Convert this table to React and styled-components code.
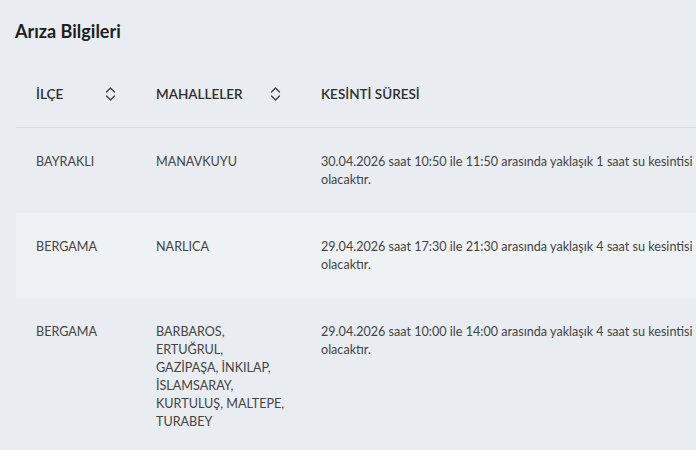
import React from "react";
import styled, { createGlobalStyle } from "styled-components";

const Global = createGlobalStyle`
  html, body { margin: 0; padding: 0; background: #e9edf1; overflow: hidden; }
  body { font-family: "Lato", "Noto Sans", sans-serif; }
`;

const Page = styled.div`
  padding: 16px 0 0 16px;
  width: 696px;
  box-sizing: border-box;
`;

const Title = styled.h2`
  margin: 0 0 15px -1px;
  font-size: 18px;
  line-height: 30px;
  font-weight: 700;
  color: #1e1e1e;
`;

const Table = styled.table`
  border-collapse: collapse;
  table-layout: fixed;
  width: 680px;
`;

const HeadCell = styled.th`
  width: ${(p) => p.$w}px;
  padding: 24px ${(p) => p.$pr ?? 20}px 24px 20px;
  text-align: left;
  font-size: 13.5px;
  line-height: 18px;
  font-weight: 600;
  color: #2e2e2e;
  border-bottom: 1px solid #d9dde2;
  box-sizing: border-box;
`;

const HeadInner = styled.div`
  display: flex;
  align-items: center;
  justify-content: space-between;
`;

const Row = styled.tr`
  background: ${(p) => (p.$striped ? "#eff2f5" : "transparent")};
`;

const Cell = styled.td`
  padding: 25px ${(p) => p.$pr ?? 20}px 24px 20px;
  vertical-align: top;
  font-size: 12.6px;
  line-height: 18px;
  color: #444;
  font-weight: 400;
`;

const Line = styled.span`
  display: block;
`;

const SortIcon = () => (
  <svg width="11" height="16" viewBox="0 0 11 16" fill="none" stroke="#3a3a3a" strokeWidth="1.3" strokeLinecap="round" strokeLinejoin="round">
    <polyline points="1.5,6 5.5,2 9.5,6" />
    <polyline points="1.5,10 5.5,14 9.5,10" />
  </svg>
);

const rows = [
  { ilce: "BAYRAKLI", mah: ["MANAVKUYU"], text: "30.04.2026 saat 10:50 ile 11:50 arasında yaklaşık 1 saat su kesintisi olacaktır." },
  { ilce: "BERGAMA", mah: ["NARLICA"], text: "29.04.2026 saat 17:30 ile 21:30 arasında yaklaşık 4 saat su kesintisi olacaktır." },
  {
    ilce: "BERGAMA",
    mah: ["BARBAROS,", "ERTUĞRUL,", "GAZİPAŞA, İNKILAP,", "İSLAMSARAY,", "KURTULUŞ, MALTEPE,", "TURABEY"],
    text: "29.04.2026 saat 10:00 ile 14:00 arasında yaklaşık 4 saat su kesintisi olacaktır.",
  },
];

export default function App() {
  return (
    <Page>
      <Global />
      <Title>Arıza Bilgileri</Title>
      <Table>
        <thead>
          <tr>
            <HeadCell $w={120}><HeadInner>İLÇE<SortIcon /></HeadInner></HeadCell>
            <HeadCell $w={165}><HeadInner>MAHALLELER<SortIcon /></HeadInner></HeadCell>
            <HeadCell $w={395} $pr={2}>KESİNTİ SÜRESİ</HeadCell>
          </tr>
        </thead>
        <tbody>
          {rows.map((r, i) => (
            <Row key={i} $striped={i % 2 === 1}>
              <Cell>{r.ilce}</Cell>
              <Cell $pr={12}>
                {r.mah.map((m, j) => (
                  <Line key={j}>{m}</Line>
                ))}
              </Cell>
              <Cell $pr={2}>{r.text}</Cell>
            </Row>
          ))}
        </tbody>
      </Table>
    </Page>
  );
}
